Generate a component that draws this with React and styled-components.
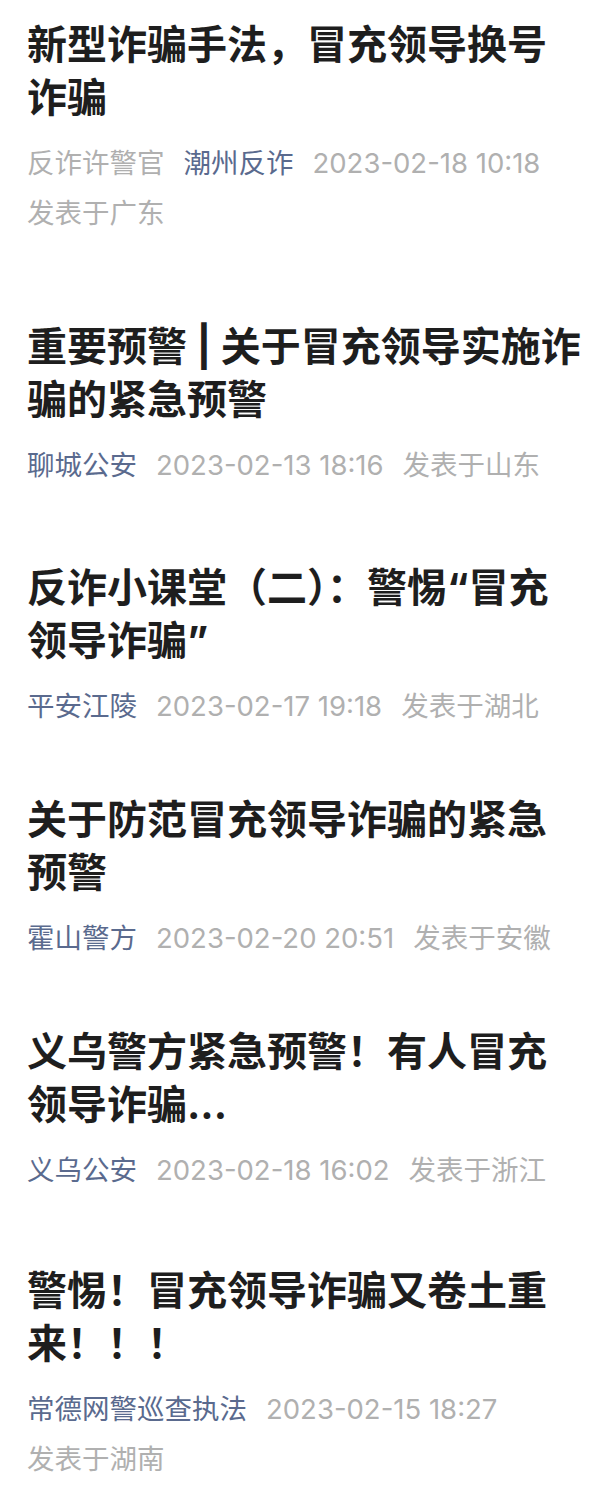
import React from 'react';
import styled, { createGlobalStyle } from 'styled-components';

const GlobalStyle = createGlobalStyle`
  html, body {
    margin: 0;
    padding: 0;
    background: #ffffff;
  }
  body {
    font-family: Inter, "Noto Sans CJK SC", sans-serif;
  }
`;

const List = styled.div`
  display: flex;
  flex-direction: column;
  width: 600px;
  padding: 18px 14px 0 27px;
  box-sizing: border-box;
`;

const Item = styled.div`
  display: flex;
  flex-direction: column;
  padding-top: ${(p) => p.$top || 0}px;
`;

const Title = styled.div`
  font-size: 40px;
  line-height: 53px;
  font-weight: 700;
  color: #1e1e1e;
`;

const Meta = styled.div`
  display: flex;
  flex-wrap: wrap;
  column-gap: 19px;
  margin-top: 14px;
  font-size: 27.5px;
  line-height: 50px;
  color: #b0b0b0;
`;

const Account = styled.span`
  color: ${(p) => (p.$link ? '#5a6a8e' : '#b0b0b0')};
`;

const Time = styled.span`
  letter-spacing: 0;
`;

const articles = [
  {
    top: 0,
    title: '新型诈骗手法，冒充领导换号诈骗',
    authors: [{ name: '反诈许警官' }, { name: '潮州反诈', link: true }],
    time: '2023-02-18 10:18',
    place: '发表于广东',
  },
  {
    top: 82,
    title: '重要预警 | 关于冒充领导实施诈骗的紧急预警',
    authors: [{ name: '聊城公安', link: true }],
    time: '2023-02-13 18:16',
    place: '发表于山东',
  },
  {
    top: 71,
    title: '反诈小课堂（二）：警惕“冒充领导诈骗”',
    authors: [{ name: '平安江陵', link: true }],
    time: '2023-02-17 19:18',
    place: '发表于湖北',
  },
  {
    top: 62,
    title: '关于防范冒充领导诈骗的紧急预警',
    authors: [{ name: '霍山警方', link: true }],
    time: '2023-02-20 20:51',
    place: '发表于安徽',
  },
  {
    top: 62,
    title: '义乌警方紧急预警！有人冒充领导诈骗...',
    authors: [{ name: '义乌公安', link: true }],
    time: '2023-02-18 16:02',
    place: '发表于浙江',
  },
  {
    top: 69,
    title: '警惕！冒充领导诈骗又卷土重来！！！',
    authors: [{ name: '常德网警巡查执法', link: true }],
    time: '2023-02-15 18:27',
    place: '发表于湖南',
  },
];

const App = () => {
  return (
    <>
      <GlobalStyle />
      <List>
        {articles.map((a) => (
          <Item key={a.title} $top={a.top}>
            <Title>{a.title}</Title>
            <Meta>
              {a.authors.map((au) => (
                <Account key={au.name} $link={au.link}>
                  {au.name}
                </Account>
              ))}
              <Time>{a.time}</Time>
              <span>{a.place}</span>
            </Meta>
          </Item>
        ))}
      </List>
    </>
  );
};

export default App;
